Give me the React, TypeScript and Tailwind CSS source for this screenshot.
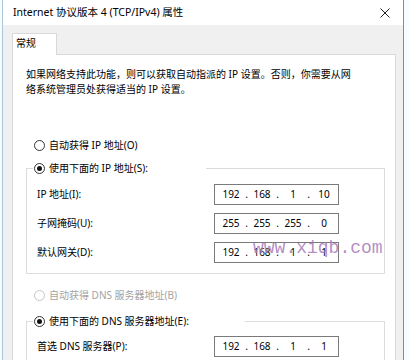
import React from 'react';

function Radio({ checked = false, disabled = false }: { checked?: boolean; disabled?: boolean }) {
  return (
    <span
      className={`w-[11px] h-[11px] shrink-0 rounded-full border bg-white flex items-center justify-center ${
        disabled ? 'border-[#c6c6c6]' : 'border-[#333333]'
      }`}
    >
      {checked && <span className="w-[5px] h-[5px] rounded-full bg-[#111111]" />}
    </span>
  );
}

function IpBox({ parts }: { parts: string[] }) {
  return (
    <div className="w-[125px] h-[21px] border border-[#7a7a7a] bg-white flex items-center pl-[5px] text-[10px] leading-[19px] text-black">
      {parts.map((p, i) => (
        <React.Fragment key={i}>
          <span className="w-[22px] text-center">{p}</span>
          {i < parts.length - 1 && <span className="w-[9px] text-center">.</span>}
        </React.Fragment>
      ))}
    </div>
  );
}

function Row({ label, parts }: { label: string; parts: string[] }) {
  return (
    <div className="flex items-center h-[21px] pl-[10px]">
      <span className="w-[177px] text-[10px] leading-[15px]">{label}</span>
      <IpBox parts={parts} />
    </div>
  );
}

function Group({
  title,
  legendWidth,
  children,
  className = '',
}: {
  title: string;
  legendWidth: string;
  children: React.ReactNode;
  className?: string;
}) {
  return (
    <fieldset className={`w-[359px] border border-[#dcdcdc] ${className}`}>
      <legend className={`ml-[6px] ${legendWidth}`}>
        <div className="h-[16px] flex items-center gap-[4px] pl-[1px] text-[10px] leading-[15px]">
          <Radio checked />
          <span>{title}</span>
        </div>
      </legend>
      {children}
    </fieldset>
  );
}

export default function App() {
  return (
    <div className="relative w-[409px] h-[360px] overflow-hidden bg-[#f7fcfe] pl-[2px] text-black font-['Noto_Sans','Noto_Sans_CJK_SC',sans-serif]">
      <div className="w-[402px] h-full flex flex-col border-l border-l-[#a9c6dc] border-r border-r-[#6f93ab]">
        {/* 标题栏 */}
        <div className="shrink-0 h-[25px] bg-white flex items-center justify-between pl-[10px] pr-[13px]">
          <span className="text-[10.5px] leading-[15px]">Internet 协议版本 4 (TCP/IPv4) 属性</span>
          <svg width="10" height="10" viewBox="0 0 10 10" className="text-[#222]">
            <path d="M0.5 0.5 L9.5 9.5 M9.5 0.5 L0.5 9.5" stroke="currentColor" strokeWidth="1" fill="none" />
          </svg>
        </div>

        <div className="flex-1 min-h-0 bg-[#f0f0f0] pt-[8px] pl-[9px] pr-[7px]">
          {/* 选项卡 */}
          <div className="relative z-10 -mb-px w-[45px] h-[22px] bg-white border-t border-l border-r border-[#d9d9d9] pl-[3px] pt-[2px] text-[10px] leading-[15px]">
            常规
          </div>

          <div className="h-[400px] bg-white border border-[#d9d9d9] pl-[13px] pt-[12px]">
            <p className="text-[10px] leading-[15px] whitespace-nowrap">
              如果网络支持此功能，则可以获取自动指派的 IP 设置。否则，你需要从网
              <br />
              络系统管理员处获得适当的 IP 设置。
            </p>

            <div className="mt-[40px] ml-[8px] h-[16px] flex items-center gap-[4px] text-[10px] leading-[15px]">
              <Radio />
              <span>自动获得 IP 地址(O)</span>
            </div>

            <Group title="使用下面的 IP 地址(S):" legendWidth="w-[173px]" className="mt-[7px] pt-[8px] pb-[10px]">
              <div className="flex flex-col gap-[8px]">
                <Row label="IP 地址(I):" parts={['192', '168', '1', '10']} />
                <Row label="子网掩码(U):" parts={['255', '255', '255', '0']} />
                <Row label="默认网关(D):" parts={['192', '168', '1', '1']} />
              </div>
            </Group>

            <div className="mt-[13px] ml-[8px] h-[16px] flex items-center gap-[4px] text-[10px] leading-[15px] text-[#a3a3a3]">
              <Radio disabled />
              <span>自动获得 DNS 服务器地址(B)</span>
            </div>

            <Group title="使用下面的 DNS 服务器地址(E):" legendWidth="w-[212px]" className="mt-[10px] pt-[7px] pb-[10px]">
              <Row label="首选 DNS 服务器(P):" parts={['192', '168', '1', '1']} />
            </Group>
          </div>
        </div>
      </div>

      {/* 水印 */}
      <span className="absolute left-[253px] top-[238px] text-[18px] leading-[20px] text-[#a47abb]/85 font-['Liberation_Mono',monospace] whitespace-nowrap">
        www.xiqb.com
      </span>
    </div>
  );
}
